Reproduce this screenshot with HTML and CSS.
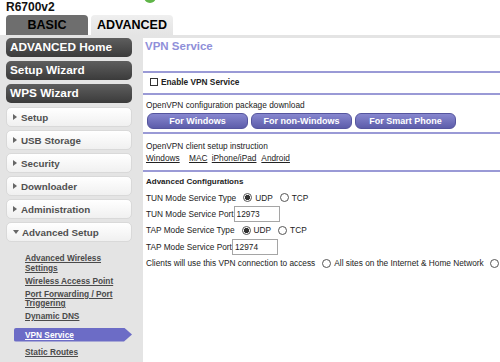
FILE: index.html
```html
<!DOCTYPE html>
<html>
  <head>
    <meta charset="UTF-8">
    <title>R6700v2 - VPN Service</title>
    <link rel="stylesheet" href="styles.css">
  </head>
  <body>
    <header class="top">
      <div class="model">R6700v2</div>
      <span class="status-dot"></span>
      <nav class="tabs">
        <a class="tab tab-basic">BASIC</a>
        <a class="tab tab-advanced">ADVANCED</a>
      </nav>
    </header>
    <div class="layout">
      <aside class="sidebar">
        <a class="nav-dark">ADVANCED Home</a>
        <a class="nav-dark">Setup Wizard</a>
        <a class="nav-dark">WPS Wizard</a>
        <a class="nav-light"><span class="arrow"></span>Setup</a>
        <a class="nav-light"><span class="arrow"></span>USB Storage</a>
        <a class="nav-light"><span class="arrow"></span>Security</a>
        <a class="nav-light"><span class="arrow"></span>Downloader</a>
        <a class="nav-light"><span class="arrow"></span>Administration</a>
        <a class="nav-light open"><span class="arrow"></span>Advanced Setup</a>
        <ul class="submenu">
          <li><a>Advanced Wireless Settings</a></li>
          <li><a>Wireless Access Point</a></li>
          <li><a>Port Forwarding / Port Triggering</a></li>
          <li><a>Dynamic DNS</a></li>
          <li class="current"><a>VPN Service</a></li>
          <li class="after-current"><a>Static Routes</a></li>
        </ul>
      </aside>
      <main class="content">
        <h1 class="page-title">VPN Service</h1>
        <hr class="rule rule-top">
        <label class="check-row"><input type="checkbox" class="check">Enable VPN Service</label>
        <hr class="rule rule-check">
        <p class="line line-download">OpenVPN configuration package download</p>
        <div class="downloads">
          <button class="dl-button">For Windows</button>
          <button class="dl-button">For non-Windows</button>
          <button class="dl-button">For Smart Phone</button>
        </div>
        <hr class="rule rule-buttons">
        <p class="line line-client">OpenVPN client setup instruction</p>
        <p class="line links">
          <a class="link-win">Windows</a>
          <a class="link-mac">MAC</a>
          <a class="link-ios">iPhone/iPad</a>
          <a>Android</a>
        </p>
        <hr class="rule rule-links">
        <div class="config">
          <div class="row"><b>Advanced Configurations</b></div>
          <div class="row">TUN Mode Service Type<input type="radio" name="tun" class="radio" checked>UDP<input type="radio" name="tun" class="radio">TCP</div>
          <div class="row">TUN Mode Service Port<input type="text" class="port" value="12973"></div>
          <div class="row">TAP Mode Service Type<input type="radio" name="tap" class="radio" checked>UDP<input type="radio" name="tap" class="radio">TCP</div>
          <div class="row">TAP Mode Service Port<input type="text" class="port" value="12974"></div>
          <div class="row">Clients will use this VPN connection to access<input type="radio" name="access" class="radio">All sites on the Internet &amp; Home Network<input type="radio" name="access" class="radio radio-wide"></div>
        </div>
      </main>
    </div>
  </body>
</html>
```

FILE: styles.css
```css
html, body {
    margin: 0;
    height: 100%;
}

body {
    font-family: "Liberation Sans", Arial, sans-serif;
    background-color: #fff;
    color: #222;
    overflow: hidden;
}

a {
    cursor: pointer;
}

/* header + tabs */

.top {
    position: relative;
    border-bottom: 3px solid #e4e4e4;
}

.model {
    font-size: 12px;
    font-weight: bold;
    line-height: 15px;
    padding-left: 6px;
    color: #111;
}

.status-dot {
    position: absolute;
    top: -9px;
    left: 144px;
    width: 12px;
    height: 12px;
    border-radius: 50%;
    background-color: #5fb548;
}

.tabs {
    display: flex;
    gap: 3px;
    padding-left: 6px;
}

.tab {
    width: 82px;
    height: 20px;
    line-height: 21px;
    text-align: center;
    font-size: 12.5px;
    font-weight: bold;
    color: #000;
    border-radius: 4px 4px 0 0;
}

.tab-basic {
    background-color: #6e6e6e;
}

.tab-advanced {
    background: linear-gradient(#efefef, #e4e4e4);
}

/* sidebar */

.layout {
    display: flex;
    min-height: calc(100vh - 38px);
}

.sidebar {
    width: 143px;
    flex-shrink: 0;
    background-color: #e4e4e4;
    display: flex;
    flex-direction: column;
}

.nav-dark {
    margin: 0 0 4px 6px;
    width: 126px;
    height: 19px;
    line-height: 19px;
    box-sizing: border-box;
    padding-left: 4px;
    border-radius: 5px;
    background: linear-gradient(#5e5e5e, #3b3b3b);
    color: #fff;
    font-size: 11.8px;
    font-weight: bold;
}

.nav-light {
    display: flex;
    align-items: center;
    margin: 0 0 3px 6px;
    width: 126px;
    height: 20px;
    box-sizing: border-box;
    padding-left: 6px;
    border: 1px solid #d9d9d9;
    border-radius: 5px;
    background: linear-gradient(#ffffff, #f0f0f0);
    color: #505050;
    font-size: 9.8px;
    font-weight: bold;
}

.arrow {
    width: 0;
    height: 0;
    border-left: 4px solid #666;
    border-top: 3px solid transparent;
    border-bottom: 3px solid transparent;
    margin-right: 4px;
}

.open .arrow {
    border-left: 3px solid transparent;
    border-right: 3px solid transparent;
    border-top: 4px solid #666;
    border-bottom: 0;
    margin-right: 3px;
}

.submenu {
    list-style: none;
    margin: 0;
    padding: 6px 0 0 0;
}

.submenu li {
    margin-top: 3.5px;
    padding-left: 25px;
    width: 100px;
    font-size: 8.3px;
    line-height: 9.5px;
    font-weight: bold;
}

.submenu li:first-child {
    margin-top: 3px;
}

.submenu a {
    color: #4a4a4a;
    text-decoration: underline;
}

.submenu .current {
    margin: 6px 0 0 14px;
    padding-left: 11px;
    width: 107px;
    height: 14px;
    line-height: 14px;
    background-color: #6c6cc6;
    border-radius: 2px 0 0 2px;
    clip-path: polygon(0 0, calc(100% - 8px) 0, 100% 50%, calc(100% - 8px) 100%, 0 100%);
}

.submenu .current a {
    color: #fff;
}

.submenu .after-current {
    margin-top: 6px;
}

/* content */

.content {
    flex: 1;
    min-width: 0;
    padding-left: 3px;
    font-size: 8.3px;
    white-space: nowrap;
    overflow: hidden;
}

.page-title {
    margin: 1px 0 0 -1px;
    font-size: 11.5px;
    line-height: 14px;
    color: #8f8fd9;
}

.rule {
    border: 0;
    height: 2px;
    margin: 0 0 0 -3px;
    background-color: #9a9ad6;
}

.rule-top {
    margin-top: 18px;
}

.rule-check {
    margin-top: 2px;
}

.rule-buttons {
    margin-top: 3px;
}

.rule-links {
    margin-top: 6px;
}

.check-row {
    display: flex;
    align-items: center;
    height: 18px;
    font-size: 8.3px;
    font-weight: bold;
}

.check {
    appearance: none;
    flex-shrink: 0;
    width: 8px;
    height: 8px;
    margin: 0 3px 0 4px;
    border: 1px solid #333;
    background-color: #fff;
}

.line {
    margin: 0;
    line-height: 12px;
}

.line-download {
    margin-top: 4px;
}

.line-client {
    margin-top: 6px;
}

.links a {
    color: #222;
    text-decoration: underline;
}

.link-win {
    margin-right: 7px;
}

.link-mac {
    margin-right: 2px;
}

.link-ios {
    margin-right: 3px;
}

.downloads {
    display: flex;
    gap: 3px;
    margin: 2px 0 0 1px;
}

.dl-button {
    flex-shrink: 0;
    width: 101px;
    height: 16px;
    padding: 0;
    border: 1px solid #55559e;
    border-radius: 6px;
    background: linear-gradient(#8787cf, #5d5daa);
    color: #fff;
    font-family: "Liberation Sans", Arial, sans-serif;
    font-size: 9px;
    font-weight: bold;
}

.config {
    margin-top: 1px;
}

.row {
    display: flex;
    align-items: center;
    height: 16.4px;
}

.row b {
    font-size: 8px;
}

.radio {
    appearance: none;
    flex-shrink: 0;
    width: 9px;
    height: 9px;
    margin: 0 3px 0 7px;
    border: 1px solid #555;
    border-radius: 50%;
    background-color: #fff;
}

.radio:checked {
    background: radial-gradient(circle, #333 0 2.4px, #fff 2.9px);
}

.radio-wide {
    margin-left: 6px;
}

.port {
    flex-shrink: 0;
    width: 46px;
    height: 16px;
    box-sizing: border-box;
    margin: 0;
    padding: 0 2px;
    border: 1px solid #a5a5a5;
    font-family: "Liberation Sans", Arial, sans-serif;
    font-size: 8.3px;
    color: #222;
}
```
